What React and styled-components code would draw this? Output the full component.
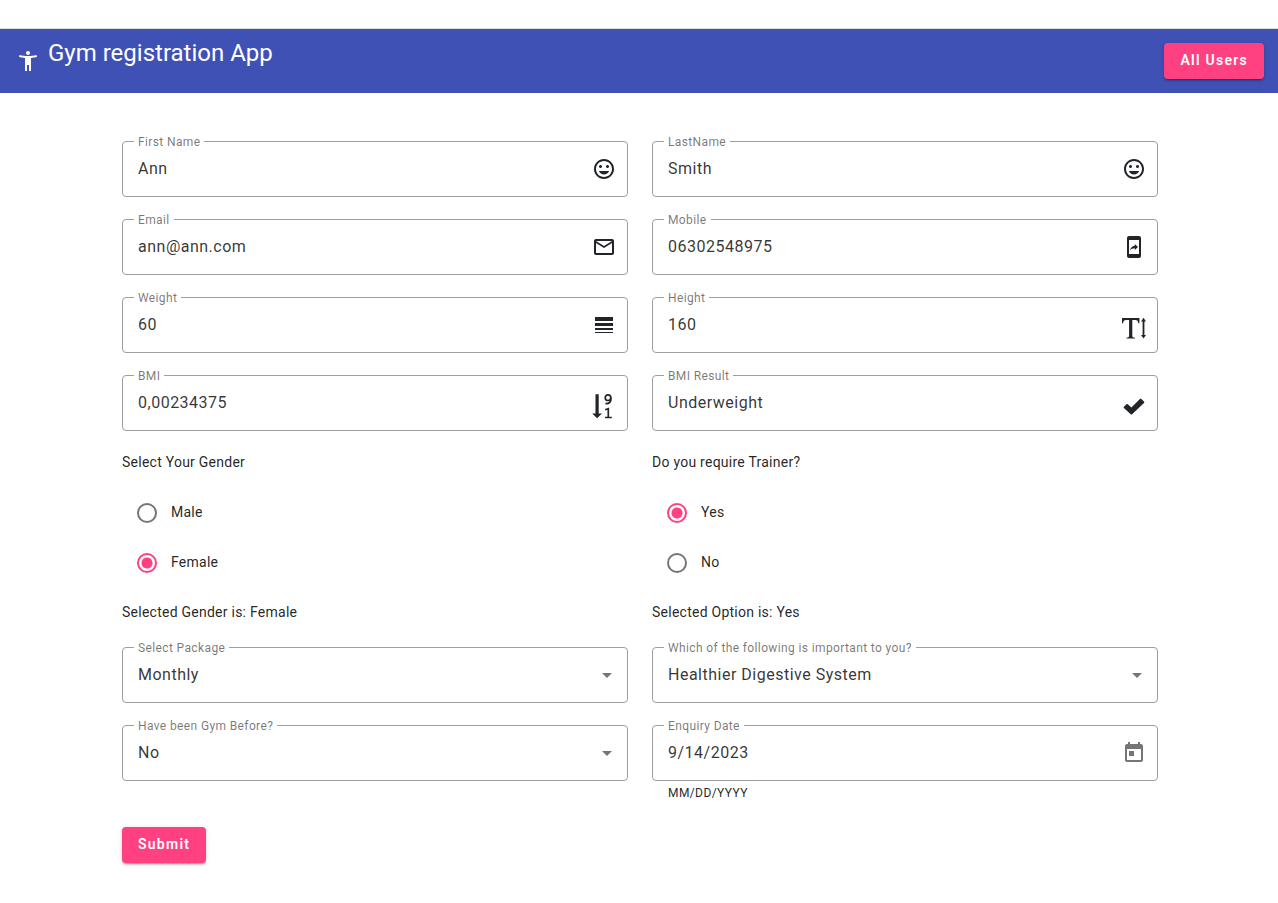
import React, { useId, useState } from 'react';
import styled, { createGlobalStyle } from 'styled-components';
import {
  MdAccessibilityNew,
  MdMood,
  MdMailOutline,
  MdMobileScreenShare,
  MdLineWeight,
} from 'react-icons/md';

const GlobalStyle = createGlobalStyle`
  *, *::before, *::after { box-sizing: border-box; }
  body {
    margin: 0;
    background: #fff;
    color: rgba(0, 0, 0, 0.87);
    font-family: Roboto, "Liberation Sans", sans-serif;
    font-size: 14px;
    line-height: 20px;
  }
`;

const Page = styled.div`
  padding-top: 28px;
`;

const Toolbar = styled.header`
  display: flex;
  align-items: center;
  height: 65px;
  padding: 0 14px 0 16px;
  border-top: 1px solid #dadce0;
  background: #3f51b5;
  color: #fff;
`;

const Brand = styled.div`
  display: flex;
  align-items: flex-start;
  gap: 8px;
  flex: 1;

  svg { margin-top: 12px; }
`;

const Title = styled.h1`
  margin: 0;
  padding-bottom: 16px;
  font-size: 24px;
  line-height: 32px;
  font-weight: 400;
`;

const Button = styled.button`
  height: 36px;
  padding: 0 16px 2px;
  border: 0;
  border-radius: 4px;
  background: #ff4081;
  color: #fff;
  font: 600 14px/34px Roboto, "Liberation Sans", sans-serif;
  letter-spacing: 0.0892857em;
  box-shadow: 0 3px 1px -2px rgba(0, 0, 0, 0.2), 0 2px 2px rgba(0, 0, 0, 0.14),
    0 1px 5px rgba(0, 0, 0, 0.12);
  cursor: pointer;
`;

const Form = styled.form`
  padding: 48px 120px 40px 122px;
`;

const Grid = styled.div`
  display: grid;
  grid-template-columns: 1fr 1fr;
  gap: 22px 24px;
`;

const FieldBox = styled.div`
  position: relative;
  display: flex;
  align-items: center;
  height: 56px;
  border: 1px solid #9e9e9e;
  border-radius: 4px;
`;

const FieldLabel = styled.label`
  position: absolute;
  top: -8px;
  left: 11px;
  padding: 0 4px;
  background: #fff;
  color: rgba(0, 0, 0, 0.54);
  font-size: 12px;
  line-height: 16px;
  letter-spacing: 0.03125em;
`;

const Control = styled.input`
  flex: 1;
  min-width: 0;
  height: 54px;
  padding: 0 52px 2px 15px;
  border: 0;
  outline: 0;
  appearance: none;
  background: transparent;
  color: rgba(0, 0, 0, 0.8);
  font: 400 16px/24px Roboto, "Liberation Sans", sans-serif;
  letter-spacing: 0.03125em;
`;

const Dropdown = styled(Control)`
  padding-bottom: 0;
`;

const Suffix = styled.span`
  position: absolute;
  right: 11px;
  display: flex;
  color: ${(p) => (p.$muted ? '#757575' : '#212529')};
  pointer-events: none;
`;

const Hint = styled.p`
  margin: 0;
  padding: 2px 16px 0;
  font-size: 12px;
  line-height: 20px;
  letter-spacing: 0.0333em;
`;

const Choices = styled.fieldset`
  min-width: 0;
  margin: -16px 0 -12px;
  padding: 0;
  border: 0;
  letter-spacing: 0.0178571em;
`;

const ChoiceText = styled.div`
  height: 50px;
  line-height: 50px;
`;

const ChoiceLegend = styled.legend`
  padding: 0;
  height: 50px;
  line-height: 50px;
`;

const Choice = styled.div`
  display: flex;
  align-items: center;
  height: 50px;
  padding-left: 15px;
`;

const Radio = styled.input`
  appearance: none;
  width: 20px;
  height: 20px;
  margin: 2px 0 0;
  border: 2px solid #757575;
  border-radius: 50%;

  &:checked {
    border-color: #ff4081;
    background: radial-gradient(circle, #ff4081 0 5px, transparent 6px);
  }
`;

const ChoiceLabel = styled.label`
  padding-left: 14px;
`;

const Actions = styled.div`
  padding-top: 24px;
`;

const TextHeightIcon = () => (
  <svg width="24" height="24" viewBox="0 0 24 24" fill="currentColor">
    <path d="M0 2H17.4V7.2H16.3C16 4.9 15.4 4 13.2 4H10.3V19.8C10.3 21.2 10.9 21.5 13 21.7V22.6H4.4V21.7C6.5 21.5 7.1 21.2 7.1 19.8V4H4.2C2 4 1.4 4.9 1.1 7.2H0Z" />
    <path d="M21.5 1.8 24 5.4H22.4V19H24L21.5 22.6 19 19H20.6V5.4H19Z" />
  </svg>
);

const SortDownIcon = () => (
  <svg width="24" height="26" viewBox="0 0 24 26" fill="none" stroke="currentColor">
    <path d="M3.5 1.2H6.7V20.4H10L5.1 25.2.2 20.4H3.5Z" fill="currentColor" stroke="none" />
    <ellipse cx="16" cy="4.7" rx="2.8" ry="2.8" strokeWidth="1.7" />
    <path d="M18.9 4.6C19.2 9 17.6 10.8 13.4 10.6" strokeWidth="1.7" />
    <path d="M13.2 16.7 16.3 15.7V24M13 24.5H19.8" strokeWidth="1.7" />
  </svg>
);

const CheckIcon = () => (
  <svg width="24" height="24" viewBox="0 0 24 24" fill="currentColor">
    <path d="M1.9 12.7 4.4 10.3Q5.1 9.7 5.8 10.3L9.4 13.6 17.9 4.9Q18.6 4.2 19.3 4.9L22 7.6Q22.7 8.3 22 9L10.1 20.2Q9.4 20.8 8.7 20.2L1.9 14Q1.2 13.4 1.9 12.7Z" />
  </svg>
);

const CaretIcon = () => (
  <svg width="10" height="5" viewBox="0 0 10 5" fill="currentColor">
    <path d="M0 0H10L5 5Z" />
  </svg>
);

const CalendarIcon = () => (
  <svg width="24" height="24" viewBox="0 0 24 24" fill="currentColor">
    <path d="M19 3h-1V1h-2v2H8V1H6v2H5c-1.11 0-1.99.9-1.99 2L3 19c0 1.1.89 2 2 2h14c1.1 0 2-.9 2-2V5c0-1.1-.9-2-2-2zm0 16H5V8h14v11zM7 10h5v5H7z" />
  </svg>
);

const CaretSuffix = styled(Suffix)`
  right: 15px;
`;

const LowSuffix = styled(Suffix)`
  padding-top: 6px;
`;

function TextField({ label, value, icon, low, muted }) {
  const id = useId();
  const Slot = low ? LowSuffix : Suffix;
  return (
    <FieldBox>
      <FieldLabel htmlFor={id}>{label}</FieldLabel>
      <Control id={id} type="text" defaultValue={value} />
      <Slot $muted={muted}>{icon}</Slot>
    </FieldBox>
  );
}

function SelectField({ label, options }) {
  const id = useId();
  return (
    <FieldBox>
      <FieldLabel htmlFor={id}>{label}</FieldLabel>
      <Dropdown as="select" id={id}>
        {options.map((o) => (
          <option key={o}>{o}</option>
        ))}
      </Dropdown>
      <CaretSuffix $muted>
        <CaretIcon />
      </CaretSuffix>
    </FieldBox>
  );
}

function RadioGroup({ legend, summary, options, initial }) {
  const name = useId();
  const [selected, setSelected] = useState(initial);
  return (
    <Choices>
      <ChoiceLegend>{legend}</ChoiceLegend>
      {options.map((o) => (
        <Choice key={o}>
          <Radio
            type="radio"
            id={name + o}
            name={name}
            checked={selected === o}
            onChange={() => setSelected(o)}
          />
          <ChoiceLabel htmlFor={name + o}>{o}</ChoiceLabel>
        </Choice>
      ))}
      <ChoiceText>
        {summary} {selected}
      </ChoiceText>
    </Choices>
  );
}

export default function App() {
  return (
    <Page>
      <GlobalStyle />
      <Toolbar>
        <Brand>
          <MdAccessibilityNew size={24} />
          <Title>Gym registration App</Title>
        </Brand>
        <Button type="button">All Users</Button>
      </Toolbar>
      <Form onSubmit={(e) => e.preventDefault()}>
        <Grid>
          <TextField label="First Name" value="Ann" icon={<MdMood size={24} />} />
          <TextField label="LastName" value="Smith" icon={<MdMood size={24} />} />
          <TextField label="Email" value="ann@ann.com" icon={<MdMailOutline size={24} />} />
          <TextField label="Mobile" value="06302548975" icon={<MdMobileScreenShare size={24} />} />
          <TextField label="Weight" value="60" icon={<MdLineWeight size={24} />} />
          <TextField label="Height" value="160" low icon={<TextHeightIcon />} />
          <TextField label="BMI" value="0,00234375" low icon={<SortDownIcon />} />
          <TextField label="BMI Result" value="Underweight" low icon={<CheckIcon />} />
          <RadioGroup
            legend="Select Your Gender"
            summary="Selected Gender is:"
            options={['Male', 'Female']}
            initial="Female"
          />
          <RadioGroup
            legend="Do you require Trainer?"
            summary="Selected Option is:"
            options={['Yes', 'No']}
            initial="Yes"
          />
          <SelectField label="Select Package" options={['Monthly', 'Quarterly', 'Yearly']} />
          <SelectField
            label="Which of the following is important to you?"
            options={['Healthier Digestive System', 'Building Lean Muscle', 'Fitness']}
          />
          <SelectField label="Have been Gym Before?" options={['No', 'Yes']} />
          <div>
            <TextField label="Enquiry Date" value="9/14/2023" muted icon={<CalendarIcon />} />
            <Hint>MM/DD/YYYY</Hint>
          </div>
        </Grid>
        <Actions>
          <Button type="submit">Submit</Button>
        </Actions>
      </Form>
    </Page>
  );
}
